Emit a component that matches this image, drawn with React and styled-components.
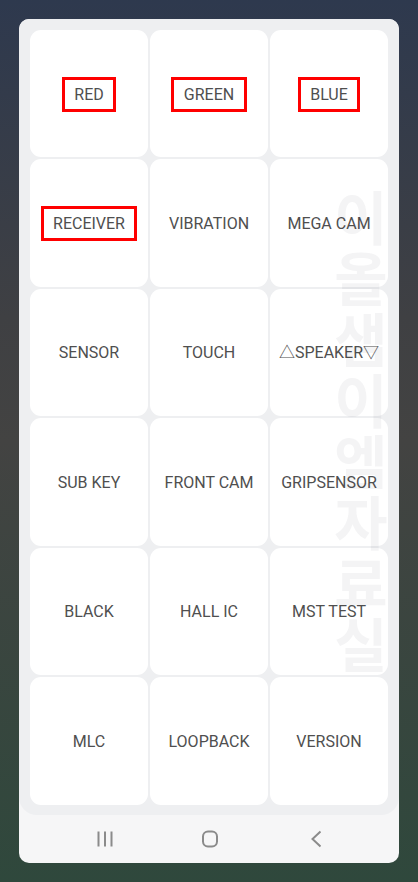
import React from 'react';
import styled, { createGlobalStyle } from 'styled-components';

const GlobalStyle = createGlobalStyle`
  html, body {
    margin: 0;
    padding: 0;
  }
  body {
    font-family: Roboto, "Noto Sans CJK KR", sans-serif;
  }
`

const Screen = styled.div`
  box-sizing: border-box;
  width: 418px;
  height: 882px;
  padding: 19px;
  background: linear-gradient(180deg, #2e394e 0%, #3f4043 36%, #434342 50%, #2f483c 100%);
`

const Phone = styled.div`
  position: relative;
  height: 844px;
  display: flex;
  flex-direction: column;
  background: #f6f6f7;
  border-radius: 10px;
  overflow: hidden;
`

const Panel = styled.div`
  flex: 1;
  box-sizing: border-box;
  padding: 10.6px 11px 10.4px;
  background: #eeeff1;
  border-radius: 0 0 18px 18px;
`

const Grid = styled.div`
  height: 100%;
  display: grid;
  grid-template-columns: repeat(3, 1fr);
  grid-template-rows: repeat(6, 1fr);
  gap: 2px;
`

const Cell = styled.div`
  display: flex;
  align-items: center;
  justify-content: center;
  padding-top: 2px;
  background: #fff;
  border-radius: 11px;
  white-space: nowrap;
`

const Label = styled.span`
  box-sizing: border-box;
  display: block;
  padding: 0 ${p => (p.$marked ? '9.5px' : '0')};
  line-height: ${p => (p.$marked ? '29px' : '20px')};
  border: ${p => (p.$marked ? '3px solid #ff0000' : 'none')};
  font-size: 16px;
  color: #4f4f4f;
`

const Watermark = styled.div`
  position: absolute;
  top: 166px;
  left: 312px;
  width: 60px;
  display: flex;
  flex-direction: column;
  align-items: center;
  font-family: "Noto Sans CJK KR", sans-serif;
  font-size: 58px;
  font-weight: 700;
  line-height: 61px;
  color: rgba(40, 40, 50, 0.05);
  pointer-events: none;
`

const NavBar = styled.div`
  height: 48px;
  flex-shrink: 0;
  box-sizing: border-box;
  padding: 0 30px 0 33px;
  display: grid;
  grid-template-columns: repeat(3, 1fr);
  align-items: center;
  justify-items: center;
`

const NavIcon = styled.svg`
  width: 20px;
  height: 20px;
  fill: none;
  stroke: #8b8b8b;
  stroke-width: 2;
`

const rows = [
  ['RED', 'GREEN', 'BLUE'],
  ['RECEIVER', 'VIBRATION', 'MEGA CAM'],
  ['SENSOR', 'TOUCH', '△SPEAKER▽'],
  ['SUB KEY', 'FRONT CAM', 'GRIPSENSOR'],
  ['BLACK', 'HALL IC', 'MST TEST'],
  ['MLC', 'LOOPBACK', 'VERSION'],
]

const marked = ['RED', 'GREEN', 'BLUE', 'RECEIVER']

const App = () => {
  return (
    <>
      <GlobalStyle />
      <Screen>
        <Phone>
          <Panel>
            <Grid>
              {rows.flat().map(name => (
                <Cell key={name}>
                  <Label $marked={marked.includes(name)}>{name}</Label>
                </Cell>
              ))}
            </Grid>
          </Panel>
          <Watermark>
            {'이올샘이엠자료실'.split('').map((ch, i) => (
              <span key={i}>{ch}</span>
            ))}
          </Watermark>
          <NavBar>
            <NavIcon viewBox="0 0 20 20">
              <path d="M3.5 2.5v15M10 2.5v15M16.5 2.5v15" />
            </NavIcon>
            <NavIcon viewBox="0 0 20 20">
              <rect x="3" y="2.5" width="14" height="15" rx="5" />
            </NavIcon>
            <NavIcon viewBox="0 0 20 20">
              <path d="M14.5 2.5 L6.5 10 L14.5 17.5" />
            </NavIcon>
          </NavBar>
        </Phone>
      </Screen>
    </>
  )
}

export default App
